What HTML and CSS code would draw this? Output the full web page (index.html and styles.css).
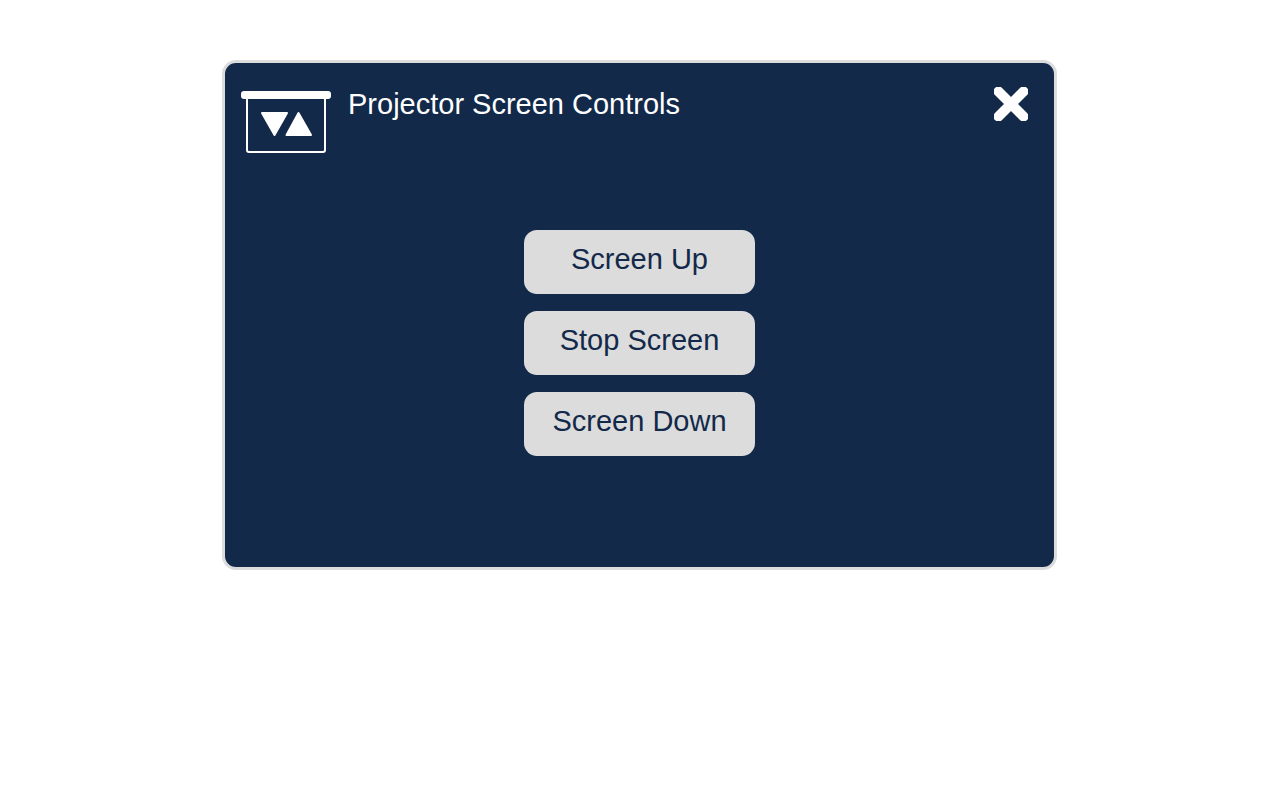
FILE: index.html
```html
<!DOCTYPE html>
<html lang="en">
<head>
<meta charset="utf-8">
<meta name="viewport" content="width=device-width, initial-scale=1">
<title>Projector Screen Controls</title>
<link rel="stylesheet" href="styles.css">
</head>
<body>
<main class="panel">
  <header class="panel-header">
    <svg class="screen-icon" viewBox="0 0 90 62" aria-hidden="true">
      <rect x="6" y="3" width="78" height="58" rx="2" fill="none" stroke="#fff" stroke-width="2"/>
      <rect width="90" height="8" rx="3" fill="#fff"/>
      <path d="M21 22H46L33.500 44ZM45.500 44H70L57.500 22Z" fill="#fff" stroke="#fff" stroke-width="2" stroke-linejoin="round"/>
    </svg>
    <h1 class="title">Projector Screen Controls</h1>
    <button class="close" type="button" aria-label="Close">
      <svg class="close-icon" viewBox="0 0 34 34" aria-hidden="true">
        <path d="M4.500 4.500L29.500 29.500M29.500 4.500L4.500 29.500" stroke="#fff" stroke-width="10" stroke-linecap="round"/>
      </svg>
    </button>
  </header>
  <div class="actions">
    <button class="action" type="button">Screen Up</button>
    <button class="action" type="button">Stop Screen</button>
    <button class="action" type="button">Screen Down</button>
  </div>
</main>
</body>
</html>
```
FILE: styles.css
```css
* {
  box-sizing: border-box;
}

body {
  margin: 0;
  padding: 60px 224px 60px 222px;
  background: #fff;
  font-family: "Liberation Sans", Arial, sans-serif;
}

.panel {
  padding: 24px 0 111px;
  border: 3px solid #dcdcdc;
  border-radius: 14px;
  background: #13294a;
}

.panel-header {
  display: flex;
  align-items: flex-start;
  padding: 0 26px 0 16px;
}

.screen-icon {
  flex: none;
  width: 90px;
  margin: 4px 17px 0 0;
}

.title {
  flex: 1;
  margin: 0;
  color: #fff;
  font-size: 29px;
  font-weight: 400;
  line-height: 34px;
}

.close {
  flex: none;
  padding: 0;
  border: 0;
  background: none;
  cursor: pointer;
}

.close-icon {
  display: block;
  width: 34px;
}

.actions {
  display: flex;
  flex-direction: column;
  align-items: center;
  gap: 17px;
  margin-top: 77px;
}

.action {
  width: 231px;
  padding: 12px 0 18px;
  border: 0;
  border-radius: 13px;
  background: #dcdcdc;
  color: #13294a;
  font-family: inherit;
  font-size: 29px;
  line-height: 34px;
  cursor: pointer;
}
```
